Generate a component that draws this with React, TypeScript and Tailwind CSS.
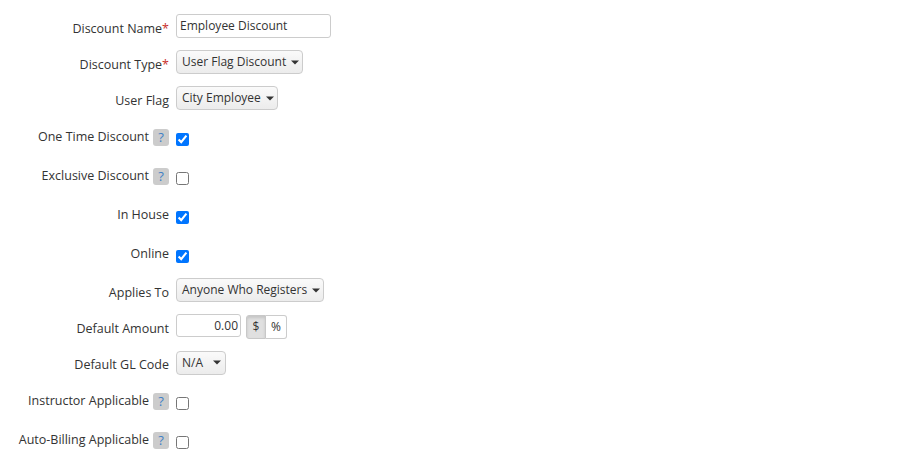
import React from "react";

const font = { fontFamily: '"Open Sans", "Liberation Sans", sans-serif' };

function Caret() {
  return (
    <svg width="8" height="5" viewBox="0 0 8 5" className="ml-[5px] shrink-0">
      <path d="M0 0.5 L8 0.5 L4 4.5 Z" fill="#333" />
    </svg>
  );
}

function Select({ text, extra = "" }: { text: string; extra?: string }) {
  return (
    <div
      className={`flex h-[24px] items-center rounded-[4px] border border-[#cccccc] bg-gradient-to-b from-[#fafafa] to-[#ececec] pl-[5px] text-[12px] text-[#333] ${extra}`}
    >
      <span>{text}</span>
      <Caret />
    </div>
  );
}

function Help() {
  return (
    <span className="ml-[4px] flex h-[17px] w-[16px] items-center justify-center rounded-[3px] bg-[#cccccc] text-[13px] leading-none text-[#3f7fc6]">
      ?
    </span>
  );
}

function Check({ checked }: { checked?: boolean }) {
  return (
    <input
      type="checkbox"
      defaultChecked={checked}
      className="mt-[4px] h-[13px] w-[13px]"
    />
  );
}

function Row({
  label,
  req,
  help,
  low,
  h,
  children,
}: {
  label: string;
  req?: boolean;
  help?: boolean;
  low?: boolean;
  h: string;
  children: React.ReactNode;
}) {
  return (
    <div className={`flex items-center ${h}`}>
      <div
        className={`flex w-[169px] shrink-0 items-center justify-end text-[12.5px] text-[#333] ${low ? "mt-[6px]" : ""}`}
      >
        <span>{label}</span>
        {req && <span className="text-[#c9302c]">*</span>}
        {help && <Help />}
      </div>
      <div className="ml-[7px] flex items-center">{children}</div>
    </div>
  );
}

export default function App() {
  return (
    <div className="min-h-[463px] w-[900px] bg-white pt-[8px]" style={font}>
      <Row label="Discount Name" req low h="h-[36px]">
        <div className="flex h-[24px] w-[155px] items-center rounded-[3px] border border-[#cccccc] bg-white pl-[3px] text-[12px] text-[#333]">
          Employee Discount
        </div>
      </Row>
      <Row label="Discount Type" req low h="h-[36px]">
        <Select text="User Flag Discount" extra="pr-[3px]" />
      </Row>
      <Row label="User Flag" low h="h-[36px]">
        <Select text="City Employee" extra="pr-[3px]" />
      </Row>
      <Row label="One Time Discount" help h="h-[39px] mt-[2px]">
        <Check checked />
      </Row>
      <Row label="Exclusive Discount" help h="h-[39px]">
        <Check />
      </Row>
      <Row label="In House" h="h-[39px]">
        <Check checked />
      </Row>
      <Row label="Online" h="h-[39px]">
        <Check checked />
      </Row>
      <Row label="Applies To" low h="h-[36px] mt-[-2px]">
        <Select text="Anyone Who Registers" extra="pr-[3px]" />
      </Row>
      <Row label="Default Amount" low h="h-[37px]">
        <div className="flex items-center">
          <div className="mt-[-2px] flex h-[23px] w-[65px] items-center justify-end rounded-[3px] border border-[#cccccc] bg-white pr-[2px] text-[12px] text-[#333]">
            0.00
          </div>
          <div className="ml-[5px] flex h-[24px] text-[12px] text-[#333]">
            <span className="flex w-[20px] items-center justify-center rounded-l-[3px] border border-[#c8c8c8] bg-[#e0e0e0] shadow-[inset_0_2px_3px_rgba(0,0,0,0.12)]">
              $
            </span>
            <span className="flex w-[21px] items-center justify-center rounded-r-[3px] border border-l-0 border-[#cccccc] bg-white">
              %
            </span>
          </div>
        </div>
      </Row>
      <Row label="Default GL Code" low h="h-[35px]">
        <Select text="N/A" extra="pr-[4px] gap-[5px]" />
      </Row>
      <Row label="Instructor Applicable" help h="h-[39px] mt-[2px]">
        <Check />
      </Row>
      <Row label="Auto-Billing Applicable" help h="h-[39px]">
        <Check />
      </Row>
    </div>
  );
}
